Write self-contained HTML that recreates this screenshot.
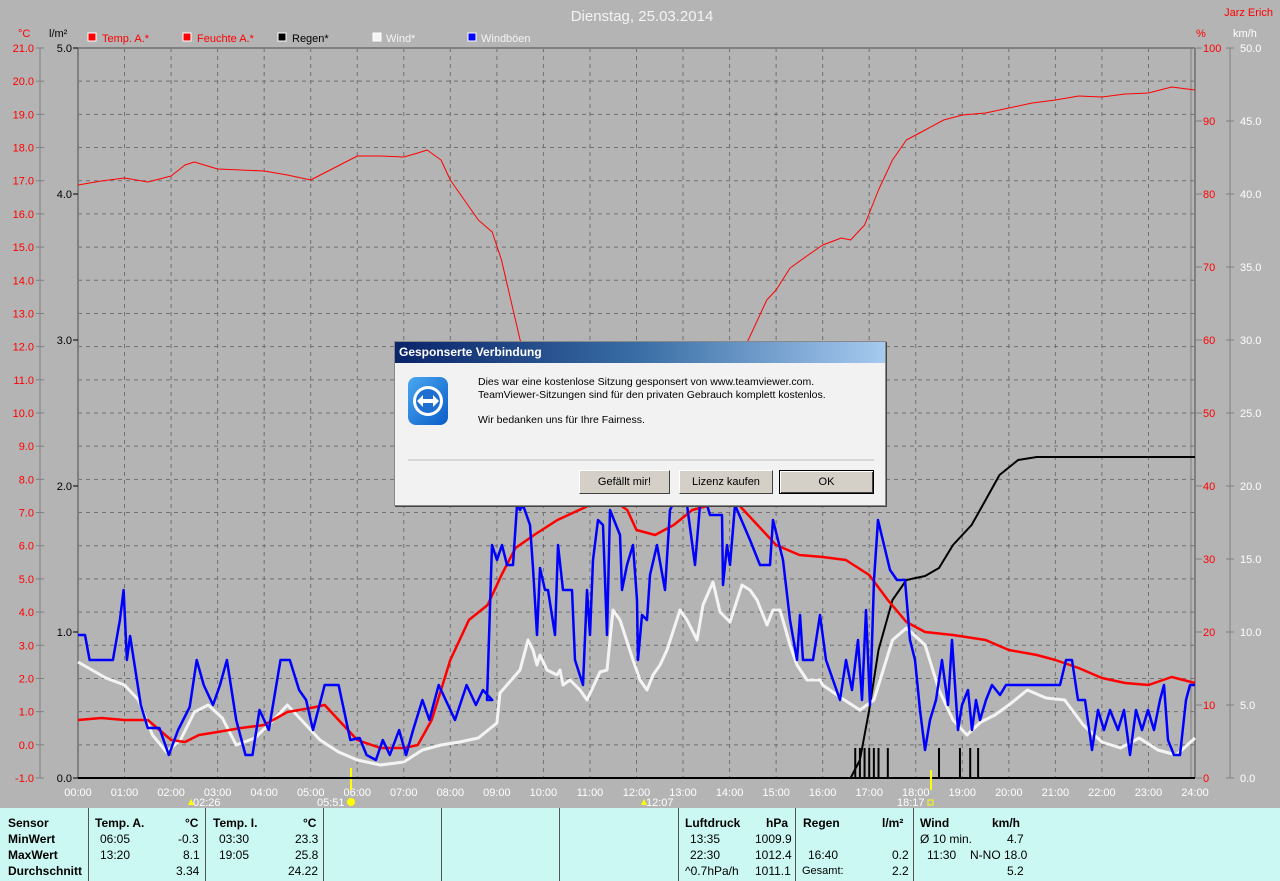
<!DOCTYPE html>
<html><head><meta charset="utf-8">
<style>
html,body{margin:0;padding:0;background:#b4b4b4;width:1280px;height:881px;overflow:hidden;font-family:"Liberation Sans",sans-serif;}
svg text{font-family:"Liberation Sans",sans-serif;}
#tbl{position:absolute;left:0;top:808px;width:1280px;height:73px;background:#ccf8f4;font-size:12px;color:#000;}
.c{position:absolute;top:0;height:73px;border-left:1px solid #555;}
.t{position:absolute;white-space:nowrap;line-height:14px;}
.b{font-weight:bold;}
#dlg{position:absolute;left:394px;top:341px;width:490px;height:163px;background:#f2f2f2;border:1px solid #888;box-shadow:1px 1px 0 #444;font-family:"Liberation Sans",sans-serif;}
#tb{height:21px;background:linear-gradient(to right,#0a246a 0%,#3a6ea5 50%,#a6caf0 100%);color:#fff;font-weight:bold;font-size:12px;line-height:21px;padding-left:4px;}
.btn{position:absolute;top:128px;height:22px;background:#d4d0c8;border:1px solid;border-color:#fff #404040 #404040 #fff;font-size:11px;text-align:center;line-height:22px;}
</style></head><body>
<svg id="s" width="1280" height="808" style="position:absolute;left:0;top:0">
<text x="642" y="21" fill="#f4f4f4" font-size="15" text-anchor="middle">Dienstag, 25.03.2014</text>
<text x="1273" y="16" fill="#f00" font-size="11" text-anchor="end">Jarz Erich</text>
<text x="18" y="37" fill="#f00" font-size="11">°C</text>
<text x="49" y="37" fill="#000" font-size="11">l/m²</text>
<text x="1196" y="37" fill="#f00" font-size="11">%</text>
<text x="1233" y="37" fill="#fff" font-size="11">km/h</text>
<g font-size="11">
<rect x="88" y="33" width="8" height="8" fill="#f00" stroke="#fff"/><text x="102" y="42" fill="#f00">Temp. A.*</text>
<rect x="183" y="33" width="8" height="8" fill="#f00" stroke="#fff"/><text x="197" y="42" fill="#f00">Feuchte A.*</text>
<rect x="278" y="33" width="8" height="8" fill="#000" stroke="#fff"/><text x="292" y="42" fill="#000">Regen*</text>
<rect x="373" y="33" width="8" height="8" fill="#f4f4f4" stroke="#fff"/><text x="386" y="42" fill="#f4f4f4">Wind*</text>
<rect x="468" y="33" width="8" height="8" fill="#00f" stroke="#fff"/><text x="481" y="42" fill="#f4f4f4">Windböen</text>
</g>
<g id="grid"></g>
<g id="lines" fill="none" stroke-linejoin="round"></g>
</svg>

<div id="dlg">
<div id="tb">Gesponserte Verbindung</div>
<svg style="position:absolute;left:11px;top:33px" width="48" height="55">
<defs><linearGradient id="g" x1="0" y1="0" x2="1" y2="1"><stop offset="0" stop-color="#4aa8f0"/><stop offset="1" stop-color="#0a5cc8"/></linearGradient></defs>
<rect x="2" y="2" width="40" height="48" rx="8" fill="url(#g)"/>
<circle cx="22" cy="26" r="15" fill="#fff"/>
<circle cx="22" cy="26" r="12" fill="#1e6fd0"/>
<path d="M11 26 L17 20 L17 24 L27 24 L27 20 L33 26 L27 32 L27 28 L17 28 L17 32 Z" fill="#fff"/>
</svg>
<div style="position:absolute;left:83px;top:34px;font-size:10.5px;line-height:12.5px;color:#000">Dies war eine kostenlose Sitzung gesponsert von www.teamviewer.com.<br>TeamViewer-Sitzungen sind für den privaten Gebrauch komplett kostenlos.<br><br>Wir bedanken uns für Ihre Fairness.</div>
<div style="position:absolute;left:13px;top:117px;width:466px;height:2px;background:#d8d8d8"></div>
<div class="btn" style="left:184px;width:89px">Gefällt mir!</div>
<div class="btn" style="left:284px;width:92px">Lizenz kaufen</div>
<div class="btn" style="left:384px;width:93px;border:1px solid #000;box-shadow:inset 1px 1px #fff,inset -1px -1px #404040">OK</div>
</div>

<div id="tbl">
<div class="c" style="left:88px"></div><div class="c" style="left:205px"></div><div class="c" style="left:323px"></div><div class="c" style="left:441px"></div><div class="c" style="left:559px"></div><div class="c" style="left:678px"></div><div class="c" style="left:795px"></div><div class="c" style="left:913px"></div>
<div class="t b" style="left:8px;top:8px">Sensor</div><div class="t b" style="left:8px;top:24px">MinWert</div><div class="t b" style="left:8px;top:40px">MaxWert</div><div class="t b" style="left:8px;top:56px">Durchschnitt</div>
<div class="t b" style="left:95px;top:8px">Temp. A.</div><div class="t b" style="left:185px;top:8px">°C</div>
<div class="t" style="left:100px;top:24px">06:05</div><div class="t" style="left:178px;top:24px">-0.3</div>
<div class="t" style="left:100px;top:40px">13:20</div><div class="t" style="left:183px;top:40px">8.1</div>
<div class="t" style="left:176px;top:56px">3.34</div>
<div class="t b" style="left:213px;top:8px">Temp. I.</div><div class="t b" style="left:303px;top:8px">°C</div>
<div class="t" style="left:219px;top:24px">03:30</div><div class="t" style="left:295px;top:24px">23.3</div>
<div class="t" style="left:219px;top:40px">19:05</div><div class="t" style="left:295px;top:40px">25.8</div>
<div class="t" style="left:288px;top:56px">24.22</div>
<div class="t b" style="left:685px;top:8px">Luftdruck</div><div class="t b" style="left:766px;top:8px">hPa</div>
<div class="t" style="left:690px;top:24px">13:35</div><div class="t" style="left:755px;top:24px">1009.9</div>
<div class="t" style="left:690px;top:40px">22:30</div><div class="t" style="left:755px;top:40px">1012.4</div>
<div class="t" style="left:685px;top:56px">^0.7hPa/h</div><div class="t" style="left:755px;top:56px">1011.1</div>
<div class="t b" style="left:803px;top:8px">Regen</div><div class="t b" style="left:882px;top:8px">l/m²</div>
<div class="t" style="left:808px;top:40px">16:40</div><div class="t" style="left:892px;top:40px">0.2</div>
<div class="t" style="left:802px;top:56px;font-size:11px">Gesamt:</div><div class="t" style="left:892px;top:56px">2.2</div>
<div class="t b" style="left:920px;top:8px">Wind</div><div class="t b" style="left:992px;top:8px">km/h</div>
<div class="t" style="left:920px;top:24px">Ø 10 min.</div><div class="t" style="left:1007px;top:24px">4.7</div>
<div class="t" style="left:927px;top:40px">11:30</div><div class="t" style="left:970px;top:40px">N-NO 18.0</div>
<div class="t" style="left:1007px;top:56px">5.2</div>
</div>

<script>
var NS="http://www.w3.org/2000/svg";
function el(p,t,a,txt){var e=document.createElementNS(NS,t);for(var k in a)e.setAttribute(k,a[k]);if(txt!==undefined)e.textContent=txt;p.appendChild(e);return e;}
var g=document.getElementById('grid'),L=document.getElementById('lines');
var X0=78,X1=1195,Y0=48,Y1=778,HX=(X1-X0)/24,CY=(Y1-Y0)/22;
function hx(h){return X0+h*HX;}
for(var i=1;i<22;i++){var y=Y0+i*CY;el(g,'line',{x1:X0,x2:X1,y1:y,y2:y,stroke:'#707070','stroke-dasharray':'4,4'});}
for(var h=1;h<24;h++){var x=hx(h);el(g,'line',{x1:x,x2:x,y1:Y0,y2:Y1,stroke:'#707070','stroke-dasharray':'4,4'});}
el(g,'line',{x1:X0,x2:X1,y1:Y0,y2:Y0,stroke:'#808080','stroke-width':2});
el(g,'line',{x1:X0,x2:X0,y1:Y0,y2:Y1,stroke:'#808080','stroke-width':2});
el(g,'line',{x1:X1,x2:X1,y1:Y0,y2:Y1,stroke:'#808080','stroke-width':2});
el(g,'line',{x1:X1-4,x2:X1-4,y1:Y0,y2:Y1,stroke:'#808080'});
el(g,'line',{x1:40,x2:40,y1:Y0,y2:Y1,stroke:'#808080'});
for(var i=0;i<=22;i++){var y=Y0+i*CY;var v=21-i;el(g,'line',{x1:36,x2:44,y1:y,y2:y,stroke:'#808080'});el(g,'text',{x:34,y:y+4,fill:'#f00','font-size':11,'text-anchor':'end'},v.toFixed(1));}
for(var i=0;i<=5;i++){var y=Y1-i*146;el(g,'text',{x:72,y:y+4,fill:'#000','font-size':11,'text-anchor':'end'},i.toFixed(1));el(g,'line',{x1:73,x2:78,y1:y,y2:y,stroke:'#000'});}
el(g,'line',{x1:1230,x2:1230,y1:Y0,y2:Y1,stroke:'#808080'});
for(var i=0;i<=10;i++){var y=Y1-i*73;el(g,'line',{x1:1196,x2:1202,y1:y,y2:y,stroke:'#808080'});el(g,'text',{x:1203,y:y+4,fill:'#f00','font-size':11},String(i*10));
el(g,'line',{x1:1226,x2:1234,y1:y,y2:y,stroke:'#808080'});el(g,'text',{x:1240,y:y+4,fill:'#fff','font-size':11},(i*5).toFixed(1));}
for(var h=0;h<=24;h++){var x=hx(h);el(g,'text',{x:x,y:796,fill:'#fff','font-size':11,'text-anchor':'middle'},(h<10?'0':'')+h+':00');}
el(g,'line',{x1:X0,x2:X1,y1:Y1,y2:Y1,stroke:'#000','stroke-width':2});
el(g,'text',{x:193,y:806,fill:'#fff','font-size':11},'02:26');
el(g,'text',{x:317,y:806,fill:'#fff','font-size':11},'05:51');
el(g,'circle',{cx:351,cy:802,r:4,fill:'#ff0'});
el(g,'text',{x:646,y:806,fill:'#fff','font-size':11},'12:07');
el(g,'text',{x:897,y:806,fill:'#fff','font-size':11},'18:17');
el(g,'rect',{x:928,y:800,width:5,height:5,fill:'none',stroke:'#ff0'});
el(g,'line',{x1:351,x2:351,y1:768,y2:790,stroke:'#ff0','stroke-width':2});
el(g,'line',{x1:931,x2:931,y1:770,y2:790,stroke:'#ff0','stroke-width':2});
el(g,'path',{d:'M188 805 l3 -6 l3 6 z',fill:'#ff0'});
el(g,'path',{d:'M641 805 l3 -6 l3 6 z',fill:'#ff0'});

function poly(pts,col,w){el(L,'polyline',{points:pts.map(function(p){return p[0].toFixed(1)+','+p[1];}).join(' '),stroke:col,'stroke-width':w});}
function H(a){return a.map(function(p){return [hx(p[0]),p[1]];});}
poly(H([[0,185],[0.5,181],[1,178],[1.5,182],[2,176],[2.3,165],[2.5,162],[3,169],[3.5,170],[4,171],[4.5,175],[5,180],[5.5,168],[6,156],[6.5,156],[7,157],[7.3,153],[7.5,150],[7.8,160],[8,180],[8.3,200],[8.6,220],[8.9,232],[9.1,260],[9.3,300],[9.5,340],[9.7,355],[10,380]]),'#f00',1);
poly(H([[14.2,360],[14.5,330],[14.8,300],[15,290],[15.3,268],[15.6,258],[16,245],[16.4,238],[16.6,240],[16.9,225],[17.2,190],[17.5,160],[17.8,140],[18.2,130],[18.6,120],[19,115],[19.5,113],[20,108],[20.5,103],[21,100],[21.5,96],[22,97],[22.5,94],[23,93],[23.5,87],[24,90]]),'#f00',1);
poly(H([[0,778],[16.6,778],[16.8,760],[17,710],[17.2,650],[17.5,600],[17.8,580],[18.2,576],[18.5,568],[18.8,545],[19.2,525],[19.5,500],[19.8,475],[20.2,460],[20.6,457],[24,457]]),'#000',2);
[16.7,16.8,16.9,17.0,17.1,17.2,17.4,18.5,18.95,19.17,19.34].forEach(function(h){el(L,'line',{x1:hx(h),x2:hx(h),y1:748,y2:778,stroke:'#000','stroke-width':2});});
var W=H([[0,662],[0.3,670],[0.6,678],[1,685],[1.3,700],[1.6,735],[1.9,752],[2.2,740],[2.5,712],[2.8,705],[3.1,718],[3.4,745],[3.8,738],[4.2,720],[4.5,705],[4.8,720],[5.2,740],[5.6,752],[6,760],[6.5,765],[7,762],[7.4,750],[7.8,745],[8.2,742],[8.6,738],[9,723]]);
W=W.concat([[500,693],[520,670],[528,640],[533,650],[537,665],[540,655],[547,670],[557,675],[560,670],[563,685],[570,680],[580,690],[587,700],[600,672],[607,670],[613,610],[620,620],[633,660],[640,680],[647,690],[653,675],[660,665],[667,650],[680,610],[687,620],[697,640],[703,605],[713,582],[720,612],[730,622],[742,585],[750,590],[757,600],[767,625],[773,610],[780,610],[790,645],[797,665],[807,680],[820,680]]);
W=W.concat(H([[16,685],[16.4,698],[16.8,710],[17.1,700],[17.5,640],[17.8,628],[18.2,645],[18.5,690],[18.8,720],[19.1,735],[19.4,722],[19.7,715],[20,705],[20.4,690],[20.8,698],[21.2,700],[21.6,725],[22,742],[22.4,748],[22.8,738],[23.2,750],[23.6,755],[24,738]]));
poly(W,'#f4f4f4',3);
var T=H([[0,720],[0.5,718],[1,720],[1.5,720],[2,740],[2.3,742],[2.6,735],[3,732],[3.5,728],[4,725],[4.5,712],[5,708],[5.3,705],[5.6,720],[6,740],[6.5,748],[7,748],[7.3,745],[7.6,720],[8,660],[8.4,620],[8.8,605],[9.1,575],[9.4,548],[9.8,535],[10.3,520],[11,505],[11.5,500],[11.8,510],[12,530],[12.4,535],[12.8,525],[13.2,510],[13.6,505],[14.2,505],[14.6,525],[15,545],[15.5,555],[16,557],[16.5,560],[17,575],[17.4,600],[17.8,622],[18.2,632],[18.8,635],[19.5,640],[20,650],[20.6,655],[21,660],[21.5,668],[22,678],[22.5,683],[23,685],[23.5,677],[24,683]]);
poly(T,'#f00',2.5);
var B=H([[0,635],[0.15,635],[0.25,660],[0.6,660],[0.75,660],[0.9,620],[0.98,590],[1.05,660],[1.12,636],[1.2,660],[1.35,705],[1.5,728],[1.75,728],[1.95,755],[2.15,730],[2.4,707],[2.55,660],[2.7,685],[2.9,705],[3.05,685],[3.2,660],[3.4,720],[3.6,755],[3.75,755],[3.9,710],[4.1,730],[4.35,660],[4.55,660],[4.75,690],[4.9,700],[5.05,730],[5.3,685],[5.6,685],[5.85,740],[6.05,738],[6.2,755],[6.4,760],[6.55,740],[6.7,755],[6.9,730],[7.05,755],[7.2,730],[7.4,700],[7.55,720],[7.75,685],[7.9,700],[8.1,720],[8.35,685],[8.55,705],[8.7,690],[8.9,700]]);
B=B.concat([[487,700],[492,545],[497,560],[502,545],[507,565],[513,565],[517,505],[520,510],[523,505],[530,525],[533,568],[537,635],[540,568],[545,590],[548,590],[555,635],[558,545],[563,590],[572,590],[575,660],[583,685],[587,590],[590,635],[593,560],[598,520],[603,525],[607,635],[610,510],[620,535],[622,590],[627,565],[633,545],[637,600],[638,660],[642,615],[647,620],[650,575],[657,545],[665,590],[670,510],[675,500],[687,505],[695,565],[700,505],[707,505],[710,515],[722,515],[723,585],[727,545],[730,565],[735,505],[750,540],[760,565],[770,565],[773,520],[783,560],[790,620],[797,660],[800,615],[803,660],[813,660],[820,615],[826,660],[833,680],[840,700],[846,660],[852,690],[858,640],[862,700],[866,610],[870,705],[874,580],[878,520],[884,545],[890,570],[897,580],[905,580],[910,640],[915,660],[920,710],[925,750],[930,720],[936,700],[942,660],[948,705],[952,640],[958,730],[962,705],[968,690],[972,730],[976,700],[980,720],[986,700],[992,685],[1000,695],[1006,685],[1060,685],[1066,660],[1072,660],[1078,700],[1085,700],[1092,750],[1098,710],[1104,730],[1110,710],[1118,730],[1124,710],[1130,755],[1136,710],[1142,730],[1148,710],[1154,730],[1160,700],[1164,685],[1168,740],[1174,755],[1180,755],[1186,700],[1190,685],[1195,685]]);
poly(B,'#00f',2.5);
</script>
</body></html>
